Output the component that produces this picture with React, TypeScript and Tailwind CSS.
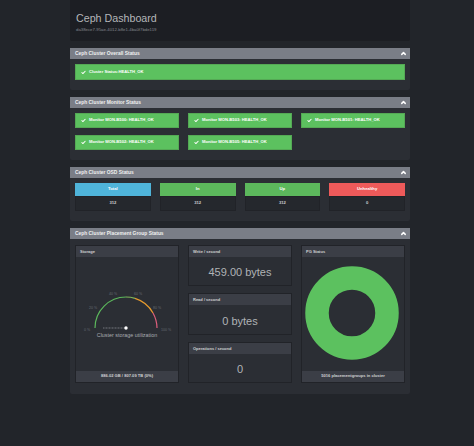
import { Check, ChevronUp } from "lucide-react";

const MONITORS = ["B500", "B503", "B501", "B502", "B505"];

const OSD = [
  { label: "Total", value: "312", color: "bg-[#4fb4da]" },
  { label: "In", value: "312", color: "bg-[#5cb85c]" },
  { label: "Up", value: "312", color: "bg-[#5cb85c]" },
  { label: "Unhealthy", value: "0", color: "bg-[#ee5a5a]" },
];

const TICKS = [
  { x: 28, y: 68, t: "0 %" },
  { x: 34, y: 46, t: "20 %" },
  { x: 54, y: 32, t: "40 %" },
  { x: 79, y: 32, t: "60 %" },
  { x: 98, y: 46, t: "80 %" },
  { x: 107, y: 68, t: "100 %" },
];

function Panel({ title, className, children }: { title: string; className: string; children: React.ReactNode }) {
  return (
    <section className={`mb-[7px] rounded-[2px] bg-[#2b2e34] ${className}`}>
      <div className="flex h-[11px] items-center justify-between bg-[#7a7e87] pl-[5px] pr-[3px] text-[4.9px] font-bold text-[#f0f0f0]">
        <span>{title}</span>
        <ChevronUp className="h-[7px] w-[7px] text-white" strokeWidth={5} />
      </div>
      {children}
    </section>
  );
}

function Alert({ text, className }: { text: string; className: string }) {
  return (
    <div className={`flex items-center gap-[3px] border border-[#55a955] bg-[#5cc15f] pl-[5px] text-[4.15px] font-bold text-white ${className}`}>
      <Check className="h-[5px] w-[5px] text-white" strokeWidth={5} />
      <span>{text}</span>
    </div>
  );
}

function SubPanel({ title, className, children }: { title: string; className: string; children: React.ReactNode }) {
  return (
    <div className={`flex flex-col border border-[#212328] bg-[#2b2e34] ${className}`}>
      <div className="flex h-[11px] shrink-0 items-center bg-[#3b3e46] pl-[4px] text-[4px] font-bold text-[#cfd0d2]">{title}</div>
      {children}
    </div>
  );
}

function Gauge() {
  return (
    <svg width="102" height="70" viewBox="17 0 102 70" className="mx-auto">
      <path d="M36 65 A31 31 0 0 1 67 34" fill="none" stroke="#5cb85c" strokeWidth="1.2" />
      <path d="M67 34 A31 31 0 0 1 76 35.4" fill="none" stroke="#7fb55a" strokeWidth="1.2" />
      <path d="M76 35.4 A31 31 0 0 1 94 50" fill="none" stroke="#e79b2e" strokeWidth="1.2" />
      <path d="M94 50 A31 31 0 0 1 98 65" fill="none" stroke="#df5f7d" strokeWidth="1.2" />
      {TICKS.map((k) => (
        <text key={k.t} x={k.x} y={k.y} fontSize="3.6" fill="#666a72" textAnchor="middle">
          {k.t}
        </text>
      ))}
      <line x1="44" y1="65" x2="66" y2="65" stroke="#85888f" strokeWidth="0.8" strokeDasharray="1 0.5" />
      <circle cx="67" cy="65" r="1.7" fill="#fff" />
    </svg>
  );
}

function Stat({ title, value, className }: { title: string; value: string; className: string }) {
  return (
    <SubPanel title={title} className={className}>
      <div className="flex flex-1 items-center justify-center pt-[3px] text-[11px] text-[#b0b3b6]">{value}</div>
    </SubPanel>
  );
}

export default function App() {
  return (
    <div className="min-h-[446px] bg-[#22252a] font-['Liberation_Sans',sans-serif]">
      <div className="ml-[70px] w-[340px]">
        <header className="mb-[7px] h-[41px] rounded-b-[2px] bg-[#1c1e23] pl-[6px] pt-[11px]">
          <h1 className="text-[10.7px] leading-[14px] text-[#b4b6b9]">Ceph Dashboard</h1>
          <p className="mt-[2px] text-[4.3px] leading-[5px] text-[#85888d]">da38ece7-95ae-4012-b8e1-4ba0f7bde119</p>
        </header>

        <Panel title="Ceph Cluster Overall Status" className="h-[42px]">
          <div className="px-[5px] pt-[5px]">
            <Alert text="Cluster Status:HEALTH_OK" className="h-[16px]" />
          </div>
        </Panel>

        <Panel title="Ceph Cluster Monitor Status" className="h-[63px]">
          <div className="grid auto-rows-[15px] grid-cols-3 gap-x-[9px] gap-y-[7px] px-[5px] pt-[5px]">
            {MONITORS.map((m) => (
              <Alert key={m} text={`Monitor MON-${m}: HEALTH_OK`} className="h-[15px]" />
            ))}
          </div>
        </Panel>

        <Panel title="Ceph Cluster OSD Status" className="h-[54px]">
          <div className="grid grid-cols-4 gap-x-[9px] px-[5px] pt-[5px]">
            {OSD.map((o) => (
              <div key={o.label}>
                <div className={`flex h-[13px] items-center justify-center text-[4.2px] font-bold text-white ${o.color}`}>{o.label}</div>
                <div className="flex h-[15px] items-center justify-center border border-[#212328] bg-[#25282d] text-[4.2px] font-bold text-[#cfd0d2]">{o.value}</div>
              </div>
            ))}
          </div>
        </Panel>

        <Panel title="Ceph Cluster Placement Group Status" className="h-[166px]">
          <div className="grid grid-cols-3 gap-x-[9px] px-[5px] pt-[6px]">
            <SubPanel title="Storage" className="h-[138px]">
              <div className="relative flex-1 pt-[6px]">
                <Gauge />
                <div className="absolute left-0 right-0 top-[74px] text-center text-[5.4px] leading-[8px] text-[#a8abb0]">Cluster storage utilization</div>
              </div>
              <div className="flex h-[11px] shrink-0 items-center justify-center bg-[#3b3e46] text-[4.1px] font-bold text-[#cfd0d2]">886.02 GB / 807.09 TB (0%)</div>
            </SubPanel>
            <div className="flex h-[138px] flex-col gap-[7px]">
              <Stat title="Write / second" value="459.00 bytes" className="h-[41px]" />
              <Stat title="Read / second" value="0 bytes" className="h-[42px]" />
              <Stat title="Operations / second" value="0" className="h-[41px]" />
            </div>
            <SubPanel title="PG Status" className="h-[138px]">
              <div className="flex flex-1 items-center justify-center pb-[2px] pr-[2px]">
                <svg width="94" height="94" viewBox="0 0 94 94">
                  <circle cx="47" cy="47" r="35" fill="none" stroke="#5cc15f" strokeWidth="23.5" />
                </svg>
              </div>
              <div className="flex h-[11px] shrink-0 items-center justify-center bg-[#3b3e46] text-[4.1px] font-bold text-[#cfd0d2]">5016 placementgroups in cluster</div>
            </SubPanel>
          </div>
        </Panel>
      </div>
    </div>
  );
}
